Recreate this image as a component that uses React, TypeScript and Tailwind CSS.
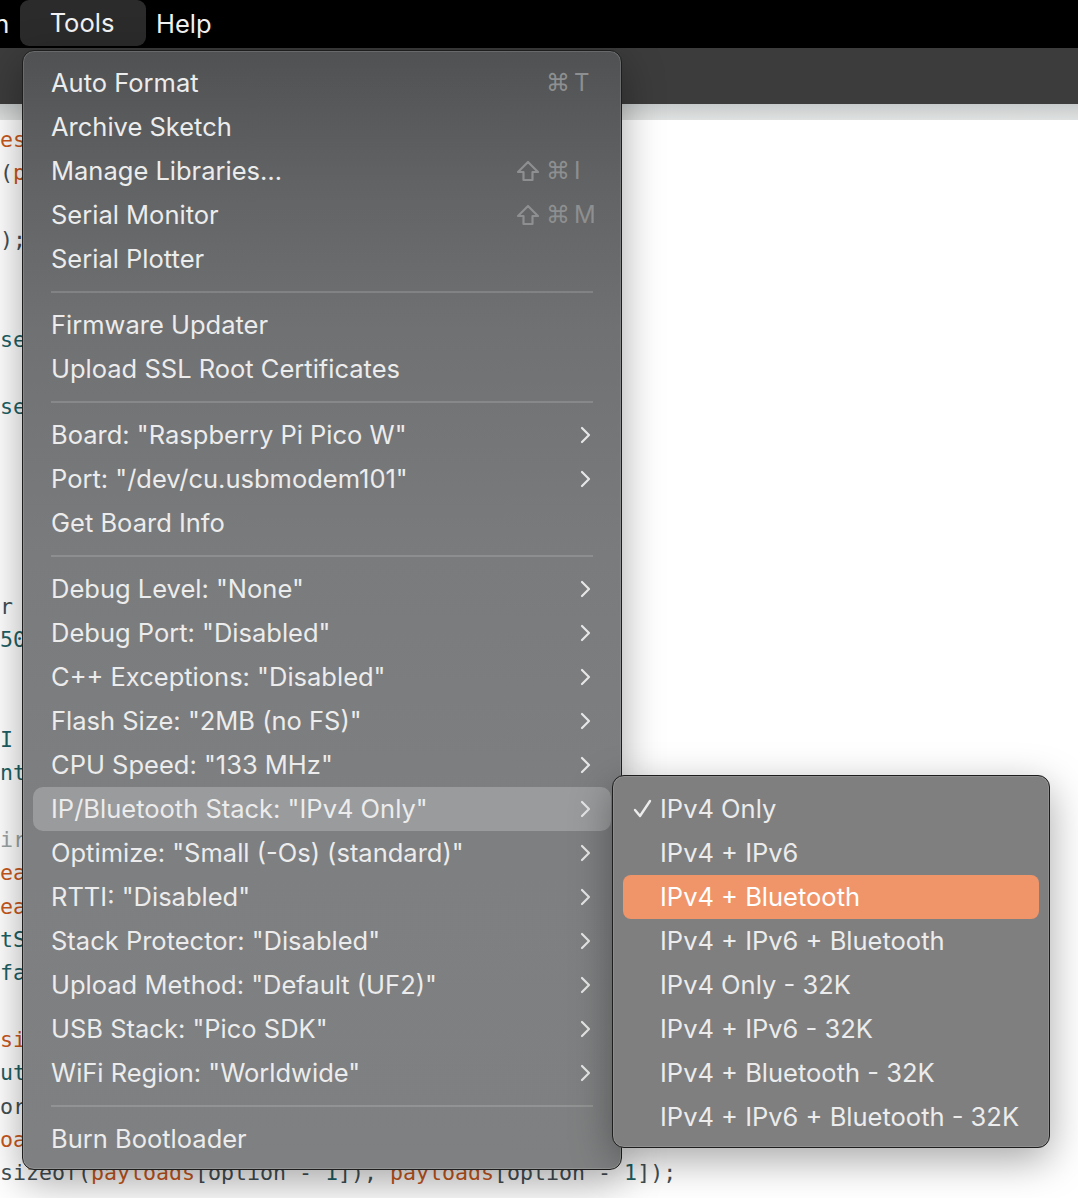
import React from "react";

type Item =
  | { kind: "sep" }
  | { kind: "item"; label: string; sc?: { shift?: boolean; key: string }; sub?: boolean; active?: boolean };

const S: Item = { kind: "sep" };
const it = (label: string, opts: Partial<Omit<Extract<Item, { kind: "item" }>, "kind" | "label">> = {}): Item => ({
  kind: "item",
  label,
  ...opts,
});

const menu: Item[] = [
  it("Auto Format", { sc: { key: "T" } }),
  it("Archive Sketch"),
  it("Manage Libraries…", { sc: { shift: true, key: "I" } }),
  it("Serial Monitor", { sc: { shift: true, key: "M" } }),
  it("Serial Plotter"),
  S,
  it("Firmware Updater"),
  it("Upload SSL Root Certificates"),
  S,
  it('Board: "Raspberry Pi Pico W"', { sub: true }),
  it('Port: "/dev/cu.usbmodem101"', { sub: true }),
  it("Get Board Info"),
  S,
  it('Debug Level: "None"', { sub: true }),
  it('Debug Port: "Disabled"', { sub: true }),
  it('C++ Exceptions: "Disabled"', { sub: true }),
  it('Flash Size: "2MB (no FS)"', { sub: true }),
  it('CPU Speed: "133 MHz"', { sub: true }),
  it('IP/Bluetooth Stack: "IPv4 Only"', { sub: true, active: true }),
  it('Optimize: "Small (-Os) (standard)"', { sub: true }),
  it('RTTI: "Disabled"', { sub: true }),
  it('Stack Protector: "Disabled"', { sub: true }),
  it('Upload Method: "Default (UF2)"', { sub: true }),
  it('USB Stack: "Pico SDK"', { sub: true }),
  it('WiFi Region: "Worldwide"', { sub: true }),
  S,
  it("Burn Bootloader"),
];

const subItems = [
  "IPv4 Only",
  "IPv4 + IPv6",
  "IPv4 + Bluetooth",
  "IPv4 + IPv6 + Bluetooth",
  "IPv4 Only - 32K",
  "IPv4 + IPv6 - 32K",
  "IPv4 + Bluetooth - 32K",
  "IPv4 + IPv6 + Bluetooth - 32K",
];

const O = "text-[#c9581c]";
const T = "text-[#1d6165]";
const G = "text-[#434f54]";
const C = "text-[#9aa4a6]";

type Seg = [string, string];
const code: Seg[][] = [
  [["essage = payload;", O]],
  [["(", G], ["payloads[i]);", O]],
  [],
  [[");", G]],
  [],
  [],
  [["serial.begin(115200);", T]],
  [],
  [["serial.println();", T]],
  [],
  [],
  [],
  [],
  [],
  [["r", G]],
  [["500);", T]],
  [],
  [],
  [["I", T]],
  [["nt option = 0;", T]],
  [],
  [["ir", C]],
  [["ead();", O]],
  [["ead();", O]],
  [["tS", T]],
  [["fault:", T]],
  [],
  [["size", O]],
  [["ut", T]],
  [["or", G]],
  [["oad", O]],
  [
    ["sizeof(", G],
    ["payloads", O],
    ["[option - ", G],
    ["1", T],
    ["]), ", G],
    ["payloads", O],
    ["[option - ", G],
    ["1", T],
    ["]);", G],
  ],
  [["strip()", O]],
];

const Chevron = () => (
  <svg width="14" height="18" viewBox="0 0 14 18" className="shrink-0">
    <polyline points="3,2 10,9 3,16" fill="none" stroke="#e6e6e6" strokeWidth="2.2" strokeLinecap="round" strokeLinejoin="round" />
  </svg>
);

const Check = () => (
  <svg width="20" height="20" viewBox="0 0 20 20" className="absolute left-[10px] top-[12px]">
    <polyline points="2,11 7,17 17,2" fill="none" stroke="#ececec" strokeWidth="2.4" strokeLinecap="round" strokeLinejoin="round" />
  </svg>
);

const ShiftIcon = () => (
  <svg width="24" height="22" viewBox="0 0 24 22" className="shrink-0">
    <path
      d="M12 2 L22 12 L16.5 12 L16.5 20 L7.5 20 L7.5 12 L2 12 Z"
      fill="none"
      stroke="#8e8f90"
      strokeWidth="2.2"
      strokeLinejoin="round"
    />
  </svg>
);

const font = { fontFamily: "Inter, 'Noto Sans', 'DejaVu Sans', sans-serif" };

export default function App() {
  return (
    <div className="relative w-[1078px] h-[1198px] overflow-hidden bg-white" style={font}>
      {/* Menu bar */}
      <div className="h-[48px] bg-black flex items-stretch text-[25.5px] text-[#f2f2f2]">
        <div className="flex items-center ml-[-73px] w-[93px]">Sketch</div>
        <div className="w-[126px] h-[46px] rounded-[9px] bg-[#2b2b2b] flex items-center justify-center pr-[2px]">Tools</div>
        <div className="flex items-center pl-[10px]">Help</div>
      </div>
      {/* Toolbar */}
      <div className="h-[56px] bg-[#3c3c3c]" />
      {/* band */}
      <div className="h-[16px] bg-gradient-to-b from-[#c8cbcb] to-[#dfe1e1]" />
      {/* Editor */}
      <div
        className="pt-[3px] text-[21.6px] leading-[33.33px] whitespace-pre"
        style={{ fontFamily: "'DejaVu Sans Mono', monospace" }}
      >
        {code.map((line, i) => (
          <div key={i} className="h-[33.33px]">
            {line.map(([t, c], j) => (
              <span key={j} className={c}>
                {t}
              </span>
            ))}
          </div>
        ))}
      </div>

      {/* Main dropdown */}
      <div
        className="absolute left-[22px] top-[50px] w-[600px] h-[1120px] rounded-[12px] border border-[#1e1e1e] shadow-[0_12px_40px_rgba(0,0,0,0.35),inset_0_0_0_1px_rgba(255,255,255,0.14)] px-[10px] pt-[10px] text-[25.5px] text-[#ececec]"
        style={{ background: "linear-gradient(to bottom, #4f5152 0%, #616364 12%, #707172 25%, #7a7b7c 45%, #7e7f80 70%, #7f8081 100%)" }}
      >
        {menu.map((m, i) =>
          m.kind === "sep" ? (
            <div key={i} className="h-[22px] flex items-center px-[18px]">
              <div className="h-[2px] w-full bg-white/15" />
            </div>
          ) : (
            <div
              key={i}
              className={
                "h-[44px] flex items-center pl-[18px] pr-[18px] rounded-[10px] " +
                (m.active ? "bg-[#9a9b9c]" : "")
              }
            >
              <span className="flex-1 whitespace-nowrap">{m.label}</span>
              {m.sc && (
                <span className="flex items-center text-[#8e8f90] text-[24px] mr-[-3px]">
                  {m.sc.shift && <ShiftIcon />}
                  <span className="ml-[6px] w-[20px] text-center" style={{ fontFamily: "'DejaVu Sans', sans-serif" }}>
                    ⌘
                  </span>
                  <span className="ml-[8px] w-[22px] text-left">{m.sc.key}</span>
                </span>
              )}
              {m.sub && <Chevron />}
            </div>
          )
        )}
      </div>

      {/* Submenu */}
      <div className="absolute left-[612px] top-[775px] w-[438px] h-[373px] rounded-[12px] border border-[#1e1e1e] bg-[#7f7f7f] shadow-[0_12px_40px_rgba(0,0,0,0.35),inset_0_0_0_1px_rgba(255,255,255,0.12)] px-[10px] pt-[11px] text-[25.5px] text-[#ececec]">
        {subItems.map((s, i) => (
          <div
            key={i}
            className={
              "relative h-[44px] flex items-center pl-[37px] rounded-[8px] whitespace-nowrap " +
              (i === 2 ? "bg-[#f0956a] text-white" : "")
            }
          >
            {i === 0 && <Check />}
            {s}
          </div>
        ))}
      </div>
    </div>
  );
}
